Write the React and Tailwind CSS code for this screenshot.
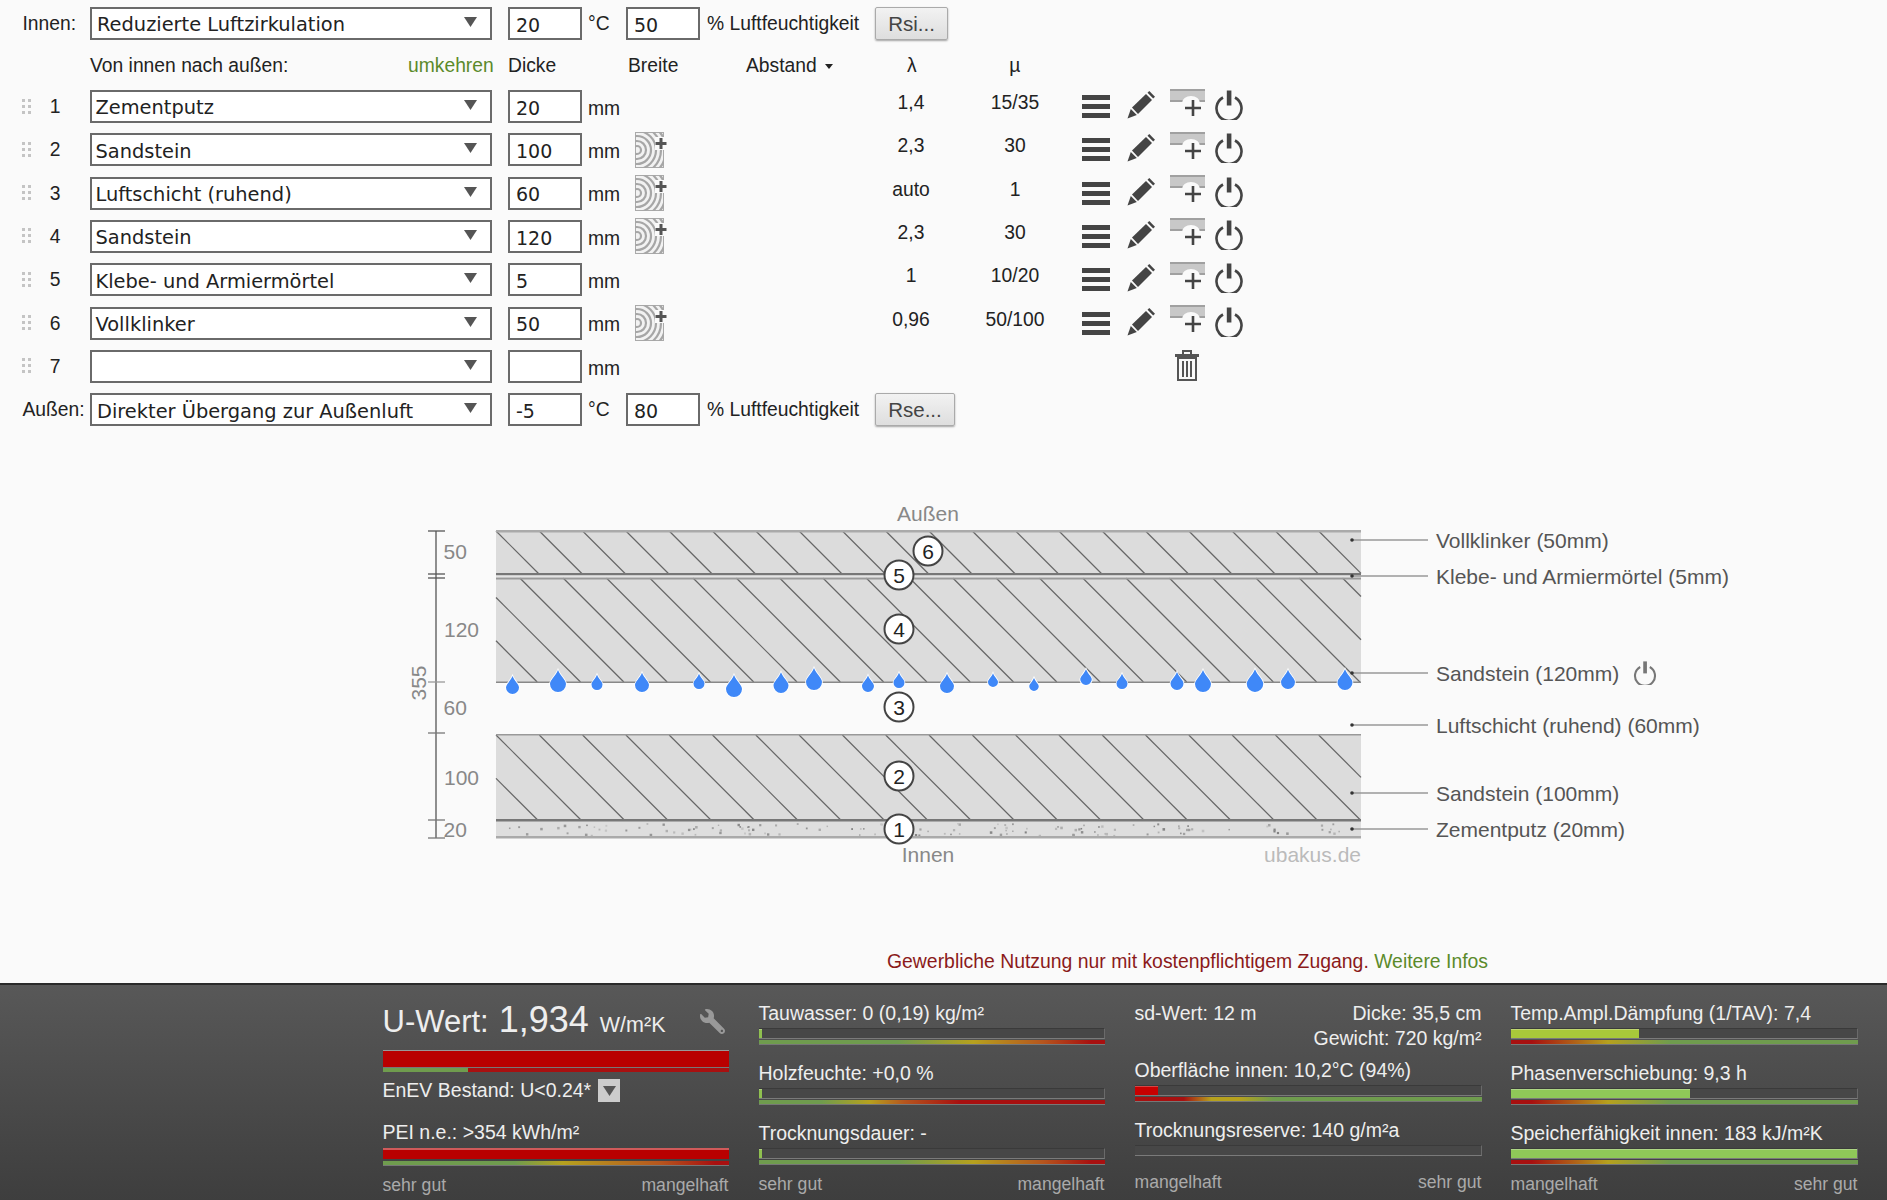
import React from "react";
import { FaWrench } from "react-icons/fa";

const arial = "font-['Liberation_Sans',Arial,sans-serif]";
const fieldFont = "font-['DejaVu_Sans',Verdana,sans-serif]";

const Triangle = () => (
  <svg width="13" height="10" viewBox="0 0 13 10" className="shrink-0">
    <polygon points="0,0 13,0 6.5,10" fill="#555" />
  </svg>
);

const Select = ({ value = "", outer }) => (
  <div className={`w-[402px] h-[33px] shrink-0 border-2 border-[#6a6a6a] bg-white flex items-center justify-between ${outer ? "pl-[5px]" : "pl-[3.5px]"} pr-[10px] ${fieldFont} text-[19.4px] text-[#222]`}>
    <span className="pt-[3px] whitespace-nowrap">{value}</span>
    <span className="mr-[3px] mb-[3px] flex"><Triangle /></span>
  </div>
);

const Field = ({ value = "" }) => (
  <div className={`w-[74px] h-[33px] shrink-0 border-2 border-[#6a6a6a] bg-white flex items-center pl-[6px] ${fieldFont} text-[19px] text-[#222]`}>
    <span className="pt-[3px]">{value}</span>
  </div>
);

const Grip = () => (
  <svg width="10" height="16" viewBox="0 0 10 16" className="shrink-0">
    {[0, 6, 12].map((y) => [0, 6].map((x) => <rect key={`${x}${y}`} x={x} y={y} width="3" height="3" fill="#c4c4c4" />))}
  </svg>
);

const Wood = () => (
  <svg width="33" height="36" viewBox="0 0 33 36" className="shrink-0">
    <svg x="0" y="0" width="29" height="36" viewBox="0 0 29 36">
      <rect x="0.5" y="0.5" width="28" height="35" fill="#f2f2f2" stroke="#aaa" strokeWidth="1" />
      <g fill="none" stroke="#a6a6a6" strokeWidth="2.2">
        {[4, 9, 14, 19, 24, 29, 34, 39].map((r) => <circle key={r} cx="2" cy="18" r={r} />)}
      </g>
    </svg>
    <rect x="20" y="5" width="12" height="13" fill="#fafafa" />
    <path d="M26 6 V17 M20.5 11.5 H31.5" stroke="#555" strokeWidth="3" />
  </svg>
);

const Menu = () => (
  <svg width="28" height="23" viewBox="0 0 28 23"><g fill="#444"><rect y="0" width="28" height="5" /><rect y="9" width="28" height="5" /><rect y="18" width="28" height="5" /></g></svg>
);

const Pencil = () => (
  <svg width="28" height="28" viewBox="0 0 28 28" className="block">
    <g fill="#444">
      <polygon points="5,16.5 19,3 25,9 11,23" />
      <polygon points="20.5,1.8 22.3,0 28,5.7 26.2,7.5" />
      <polygon points="3.8,18 9.8,24 0.5,27.5" />
    </g>
  </svg>
);

const LayerPlus = () => (
  <svg width="35" height="28" viewBox="0 0 35 28" className="block">
    <rect x="0" y="0" width="35" height="11" fill="#c8c8c8" />
    <rect x="0" y="0" width="35" height="2" fill="#a0a0a0" />
    <rect x="0" y="11" width="35" height="2" fill="#a0a0a0" />
    <path d="M12 14 A9 7 0 0 1 30 14 Z" fill="#fafafa" />
    <path d="M23 11 V27 M15 19 H31" stroke="#444" strokeWidth="2.6" />
  </svg>
);

const Power = ({ size = 30, color = "#444" }) => (
  <svg width={size} height={size} viewBox="0 0 30 30" className="block">
    <path d="M9 7.5 A12.5 12.5 0 1 0 21 7.5" fill="none" stroke={color} strokeWidth="2.6" />
    <rect x="12.8" y="0.5" width="4.6" height="15" fill={color} />
  </svg>
);

const Trash = () => (
  <svg width="24" height="31" viewBox="0 0 24 31" className="block">
    <g fill="#555">
      <rect x="0" y="4" width="24" height="3" />
      <rect x="8" y="0" width="8" height="2" />
      <rect x="7" y="0" width="2" height="5" />
      <rect x="15" y="0" width="2" height="5" />
    </g>
    <rect x="3" y="8" width="18" height="22" fill="none" stroke="#555" strokeWidth="2" />
    <path d="M8 11 V27 M12 11 V27 M16 11 V27" stroke="#555" strokeWidth="2" />
  </svg>
);

const rows = [
  { n: 1, v: "Zementputz", d: "20", l: "1,4", m: "15/35" },
  { n: 2, v: "Sandstein", d: "100", l: "2,3", m: "30", wood: true },
  { n: 3, v: "Luftschicht (ruhend)", d: "60", l: "auto", m: "1", wood: true },
  { n: 4, v: "Sandstein", d: "120", l: "2,3", m: "30", wood: true },
  { n: 5, v: "Klebe- und Armiermörtel", d: "5", l: "1", m: "10/20" },
  { n: 6, v: "Vollklinker", d: "50", l: "0,96", m: "50/100", wood: true },
];

const Layer = ({ r }) => (
  <div className={`flex items-center h-[33px] mb-[10.33px] ${arial} text-[19.3px] text-[#222]`}>
    <div className="w-[90px] pl-[22px] flex items-center shrink-0">
      <Grip />
      <span className="w-[46px] pt-[2px] text-center">{r.n}</span>
    </div>
    <Select value={r.v} />
    <div className="ml-4"><Field value={r.d} /></div>
    <span className="w-[53px] pl-[6px] pt-[5px] shrink-0">mm</span>
    <div className="w-[236px] shrink-0 flex">{r.wood && <Wood />}</div>
    <span className="w-[80px] text-center pb-[6px] shrink-0">{r.l}</span>
    <span className="w-[80px] ml-[24px] text-center pb-[6px] shrink-0">{r.m}</span>
    <div className="flex items-center ml-[27px]">
      <div className="w-[45px]"><Menu /></div>
      <div className="w-[43px] pb-[3px]"><Pencil /></div>
      <div className="w-[44px] pb-[8px]"><LayerPlus /></div>
      <div className="pb-[3px]"><Power /></div>
    </div>
  </div>
);

const Btn = ({ children, w }) => (
  <button className={`${w} ml-[16px] h-[33px] pt-[1px] border border-[#aaa] rounded-[2px] bg-gradient-to-b from-[#f2f2f2] to-[#dedede] shadow-[0_1px_2px_rgba(0,0,0,0.35)] text-[#444] text-[20.5px]`}>{children}</button>
);

const Climate = ({ label, select, t, h, btn, w }) => (
  <div className={`flex items-center h-[33px] ${arial} text-[19.3px] text-[#222]`}>
    <span className="w-[90px] pl-[22.5px] pt-[2px] shrink-0">{label}</span>
    <Select value={select} outer />
    <div className="ml-4"><Field value={t} /></div>
    <span className="w-[44px] pl-[6px] pt-[2px] shrink-0">°C</span>
    <Field value={h} />
    <span className="ml-[7px] pt-[2px] whitespace-nowrap w-[152px]">% Luftfeuchtigkeit</span>
    <Btn w={w}>{btn}</Btn>
  </div>
);

/* ---------- drawing ---------- */
const L = 496, R = 1361;
const clipLine = (top, bottom, k) => {
  const x0 = L + 43.3 * k;
  let x1 = x0, y1 = top, x2 = x0 + (bottom - top), y2 = bottom;
  if (x1 < L) { y1 = top + (L - x1); x1 = L; }
  if (x2 > R) { y2 = bottom - (x2 - R); x2 = R; }
  if (y1 >= bottom || x1 >= R) return null;
  return <line key={`${top}-${k}`} x1={x1} y1={y1} x2={x2} y2={y2} stroke="#666" strokeWidth="1.2" />;
};
const hatch = (top, bottom, offset) => {
  const out = [];
  for (let k = -8; k < 22; k++) out.push(clipLine(top, bottom, k + offset));
  return out;
};
const speckles = (() => {
  let s = 12345;
  const rnd = () => ((s = (s * 1103515245 + 12345) & 0x7fffffff) / 0x7fffffff);
  const out = [];
  for (let i = 0; i < 130; i++) {
    const x = L + 8 + rnd() * (R - L - 16);
    const y = 823 + rnd() * 12;
    const g = 130 + Math.floor(rnd() * 70);
    const sz = 1.4 + rnd() * 1.2;
    out.push(<rect key={i} x={x} y={y} width={sz} height={sz} fill={`rgb(${g},${g},${g})`} />);
  }
  return out;
})();
const drops = [
  [512.5, 694, 13], [558, 692, 16], [597, 690, 11], [642, 692, 14], [699, 689, 11], [734, 697, 16],
  [781, 693, 15], [814, 690, 16], [868, 692, 12], [899, 688, 11], [947, 693, 14],
  [993, 687, 10], [1034, 691, 9.5], [1086, 685, 11.5], [1122, 689, 11], [1177, 690, 13], [1203, 692, 16], [1255, 692, 16.5], [1288, 689, 14], [1345, 690, 15],
];
const Drop = ({ x, y, w }) => {
  const r = w / 2, h = w * 1.38;
  const top = y - h;
  const d = `M${x} ${top} C${x + r * 0.3} ${top + h * 0.28} ${x + r} ${y - r * 1.5} ${x + r} ${y - r} A${r} ${r} 0 1 1 ${x - r} ${y - r} C${x - r} ${y - r * 1.5} ${x - r * 0.3} ${top + h * 0.28} ${x} ${top} Z`;
  return <path d={d} fill="#3f88f8" stroke="#fff" strokeWidth="1.6" paintOrder="stroke" />;
};
const ticks = [[531, "#555"], [574, "#555"], [578, "#555"], [682, "#999"], [733, "#777"], [820, "#777"], [838, "#777"]];
const leaders = [540, 576, 673, 725, 793, 829];

const Circle = ({ pos, n }) => (
  <div className={`absolute ${pos} w-[31px] h-[31px] -translate-x-1/2 -translate-y-1/2 rounded-full border-2 border-[#444] bg-white flex items-center justify-center text-[21px] text-[#222]`}>{n}</div>
);
const Tag = ({ pos, children, cls = "text-[#555]" }) => (
  <span className={`absolute ${pos} -translate-y-1/2 whitespace-nowrap leading-none ${cls}`}>{children}</span>
);

const Drawing = () => (
  <div className={`relative h-[400px] mt-[63px] ${arial} text-[21px]`}>
    <svg className="absolute inset-0" width="1887" height="400" viewBox="0 490 1887 400">
      <rect x={L} y="531" width={R - L} height="43" fill="#dcdcdc" />
      <rect x={L} y="578" width={R - L} height="104" fill="#dcdcdc" />
      <rect x={L} y="735" width={R - L} height="85" fill="#dcdcdc" />
      <rect x={L} y="820" width={R - L} height="18" fill="#dedede" />
      {hatch(531, 574, 0)}
      {hatch(578, 682, 0.55)}
      {hatch(735, 820, 0)}
      {speckles}
      <g>
        <rect x={L} y="530" width={R - L} height="2.5" fill="#aaa" />
        <rect x={L} y="573" width={R - L} height="2.5" fill="#777" />
        <rect x={L} y="575.5" width={R - L} height="2" fill="#e4e4e4" />
        <rect x={L} y="577.5" width={R - L} height="2" fill="#999" />
        <rect x={L} y="681.5" width={R - L} height="1.5" fill="#888" />
        <rect x={L} y="734" width={R - L} height="1.5" fill="#999" />
        <rect x={L} y="819" width={R - L} height="2.5" fill="#777" />
        <rect x={L} y="836" width={R - L} height="2.5" fill="#aaa" />
      </g>
      <line x1="436" y1="531" x2="436" y2="838" stroke="#555" strokeWidth="1.3" />
      {ticks.map(([y, c]) => <line key={y} x1="428" y1={y} x2="445" y2={y} stroke={c} strokeWidth="1.3" />)}
      {leaders.map((y) => (
        <g key={y}>
          <line x1="1352" y1={y} x2="1428" y2={y} stroke="#999" strokeWidth="1.3" />
          <circle cx="1352" cy={y} r="1.8" fill="#333" />
        </g>
      ))}
      {drops.map(([x, y, w], i) => <Drop key={i} x={x} y={y} w={w} />)}
    </svg>
    <Tag pos="left-[443.5px] top-[61px]" cls="text-[#888]">50</Tag>
    <Tag pos="left-[444px] top-[139px]" cls="text-[#888]">120</Tag>
    <Tag pos="left-[443.5px] top-[217px]" cls="text-[#888]">60</Tag>
    <Tag pos="left-[444px] top-[287px]" cls="text-[#888]">100</Tag>
    <Tag pos="left-[443.5px] top-[339px]" cls="text-[#888]">20</Tag>
    <span className="absolute left-[418px] top-[193px] -translate-x-1/2 -translate-y-1/2 -rotate-90 text-[#888] leading-none">355</span>
    <span className="absolute left-[928px] top-[23px] -translate-x-1/2 -translate-y-1/2 text-[#888] leading-none">Außen</span>
    <span className="absolute left-[928px] top-[364px] -translate-x-1/2 -translate-y-1/2 text-[#888] leading-none">Innen</span>
    <span className="absolute right-[526px] top-[364px] -translate-y-1/2 text-[#bbb] leading-none">ubakus.de</span>
    <Circle pos="left-[899px] top-[339px]" n="1" />
    <Circle pos="left-[899px] top-[286px]" n="2" />
    <Circle pos="left-[899px] top-[217px]" n="3" />
    <Circle pos="left-[899px] top-[139px]" n="4" />
    <Circle pos="left-[899px] top-[85px]" n="5" />
    <Circle pos="left-[928px] top-[61px]" n="6" />
    <Tag pos="left-[1436px] top-[50px]">Vollklinker (50mm)</Tag>
    <Tag pos="left-[1436px] top-[86px]">Klebe- und Armiermörtel (5mm)</Tag>
    <Tag pos="left-[1436px] top-[183px]">Sandstein (120mm)</Tag>
    <Tag pos="left-[1436px] top-[235px]">Luftschicht (ruhend) (60mm)</Tag>
    <Tag pos="left-[1436px] top-[303px]">Sandstein (100mm)</Tag>
    <Tag pos="left-[1436px] top-[339px]">Zementputz (20mm)</Tag>
    <span className="absolute left-[1633px] top-[171px]"><Power size={24} color="#777" /></span>
  </div>
);

/* ---------- results bar ---------- */
const Track = ({ fill, width }) => (
  <div className="h-[11px] bg-[#474747] border-t border-[#3a3a3a] border-b border-b-[#7a7a7a] border-r border-r-[#6a6a6a]">
    {fill && <div className={`h-full ${fill} ${width} border-t border-[#ffffff44]`} />}
  </div>
);
const Scale = ({ g, mt = "mt-[1px]" }) => <div className={`h-[4px] ${mt} ${g} shadow-[0_1px_0_#777]`} />;

const gTau = "bg-[linear-gradient(90deg,#6f9c4e_0%,#6f9c4e_40%,#b6a11e_62%,#b6561e_82%,#a81010_96%)]";
const gHolz = "bg-[linear-gradient(90deg,#6f9c4e_0%,#6f9c4e_18%,#b6a11e_32%,#b6561e_42%,#a81010_58%)]";
const gPei = "bg-[linear-gradient(90deg,#6f9c4e_0%,#6f9c4e_38%,#b6a11e_52%,#b6561e_80%,#a81010_96%)]";
const gUp = "bg-[linear-gradient(90deg,#a81010_0%,#a81010_6%,#b6a11e_28%,#6f9c4e_46%,#6f9c4e_100%)]";
const gOb = "bg-[linear-gradient(90deg,#a81010_0%,#a81010_14%,#b6a11e_22%,#b6a11e_30%,#6f9c4e_40%,#6f9c4e_100%)]";

const Metric = ({ label, fill, width, g, mb = "mb-[17px]" }) => (
  <div className={mb}>
    <div className="h-[24px] leading-[24px] whitespace-nowrap">{label}</div>
    <div className="mt-[3px]">
      <Track fill={fill} width={width} />
      {g && <Scale g={g} />}
    </div>
  </div>
);
const Foot = ({ a, b, mt = "mt-[8px]" }) => (
  <div className={`flex justify-between h-[24px] leading-[24px] text-[#aaa] text-[17.6px] ${mt}`}><span>{a}</span><span>{b}</span></div>
);

const Bar = () => (
  <div className={`mt-auto h-[217px] border-t-2 border-[#2a2a2a] bg-gradient-to-b from-[#585858] to-[#3e3e3e] pl-[382.5px] pt-[16px] flex ${arial} text-[19.5px] text-[#eee]`}>
    <div className="w-[346px] shrink-0">
      <div className="h-[34px] flex items-center justify-between">
        <div className="flex items-baseline whitespace-nowrap pt-[3px]">
          <span className="text-[31px]">U-Wert:</span>
          <span className="text-[36px] ml-[10px]">1,934</span>
          <span className="text-[21.5px] ml-[11px]">W/m²K</span>
        </div>
        <FaWrench size={25} className="-scale-x-100 text-[#999] mr-[4px] mt-[6px]" />
      </div>
      <div className="mt-[15px] h-[18px] border-t border-[#999] border-b border-b-[#777] bg-[#b90000]" />
      <div className="h-[4px] bg-[linear-gradient(90deg,#6f9c4e_0%,#6f9c4e_24.5%,#a81010_24.5%,#a81010_100%)]" />
      <div className="flex items-center mt-[7px] h-[23px] whitespace-nowrap">
        <span className="pt-[1px]">EnEV Bestand: U&lt;0.24*</span>
        <span className="ml-[7px] w-[22px] h-[23px] bg-[#ccc] flex items-center justify-center"><Triangle /></span>
      </div>
      <div className="h-[24px] leading-[24px] mt-[18px] whitespace-nowrap">PEI n.e.: &gt;354 kWh/m²</div>
      <div className="mt-[4px] h-[11px] border-t-2 border-[#d05a5a] bg-[#b90000]" />
      <Scale g={gPei} mt="mt-[2px]" />
      <Foot a="sehr gut" b="mangelhaft" />
    </div>
    <div className="w-[346px] ml-[30px] shrink-0">
      <Metric label="Tauwasser: 0 (0,19) kg/m²" fill="bg-[#8fc04f]" width="w-[3px]" g={gTau} />
      <Metric label="Holzfeuchte: +0,0 %" fill="bg-[#8fc04f]" width="w-[3px]" g={gHolz} />
      <Metric label="Trocknungsdauer: -" fill="bg-[#8fc04f]" width="w-[3px]" g={gTau} mb="mb-0" />
      <Foot a="sehr gut" b="mangelhaft" />
    </div>
    <div className="w-[347px] ml-[30px] shrink-0">
      <div className="flex justify-between h-[24px] leading-[24px]"><span>sd-Wert: 12 m</span><span>Dicke: 35,5 cm</span></div>
      <div className="text-right h-[33px] leading-[27px]">Gewicht: 720 kg/m²</div>
      <Metric label="Oberfläche innen: 10,2°C (94%)" fill="bg-[#c80000]" width="w-[23px]" g={gOb} />
      <Metric label="Trocknungsreserve: 140 g/m²a" mb="mb-0" />
      <Foot a="mangelhaft" b="sehr gut" mt="mt-[14px]" />
    </div>
    <div className="w-[347px] ml-[29px] shrink-0">
      <Metric label="Temp.Ampl.Dämpfung (1/TAV): 7,4" fill="bg-[#a8c83a]" width="w-[128px]" g={gUp} />
      <Metric label="Phasenverschiebung: 9,3 h" fill="bg-[#8fc858]" width="w-[179px]" g={gUp} />
      <Metric label="Speicherfähigkeit innen: 183 kJ/m²K" fill="bg-[#8fc858]" width="w-full" g={gUp} mb="mb-0" />
      <Foot a="mangelhaft" b="sehr gut" />
    </div>
  </div>
);

export default function App() {
  return (
    <div className="w-[1887px] h-[1200px] overflow-hidden bg-[#fafafa] flex flex-col">
      <div className="pt-[7px]">
        <Climate label="Innen:" select="Reduzierte Luftzirkulation" t="20" h="50" btn="Rsi..." w="w-[73px]" />
        <div className={`flex items-center h-[50px] pt-[2px] ${arial} text-[19.3px] text-[#222]`}>
          <span className="ml-[90px] w-[318px] whitespace-nowrap">Von innen nach außen:</span>
          <a className="w-[83px] text-right text-[#5b8a2b]">umkehren</a>
          <span className="ml-[17px] w-[120px]">Dicke</span>
          <span className="w-[118px]">Breite</span>
          <span className="whitespace-nowrap">Abstand</span>
          <svg width="8" height="5" viewBox="0 0 8 5" className="ml-[8px]"><polygon points="0,0 8,0 4,5" fill="#222" /></svg>
          <span className="ml-[39px] w-[80px] text-center">λ</span>
          <span className="ml-[23px] w-[80px] text-center">µ</span>
        </div>
        {rows.map((r) => <Layer key={r.n} r={r} />)}
        <div className={`flex items-center h-[33px] mb-[10.33px] ${arial} text-[19.3px] text-[#222]`}>
          <div className="w-[90px] pl-[22px] flex items-center shrink-0">
            <Grip />
            <span className="w-[46px] pt-[2px] text-center">7</span>
          </div>
          <Select />
          <div className="ml-4"><Field /></div>
          <span className="w-[53px] pl-[6px] pt-[5px] shrink-0">mm</span>
          <div className="ml-[540px] pb-[2px]"><Trash /></div>
        </div>
        <Climate label="Außen:" select="Direkter Übergang zur Außenluft" t="-5" h="80" btn="Rse..." w="w-[80px]" />
      </div>
      <div className="pt-[1px]"><Drawing /></div>
      <div className={`mt-[59px] pl-[887px] h-[24px] leading-[24px] ${arial} text-[19.4px] text-[#8b1a1a] whitespace-nowrap`}>
        Gewerbliche Nutzung nur mit kostenpflichtigem Zugang. <span className="text-[#5b8a2b]">Weitere Infos</span>
      </div>
      <Bar />
    </div>
  );
}
